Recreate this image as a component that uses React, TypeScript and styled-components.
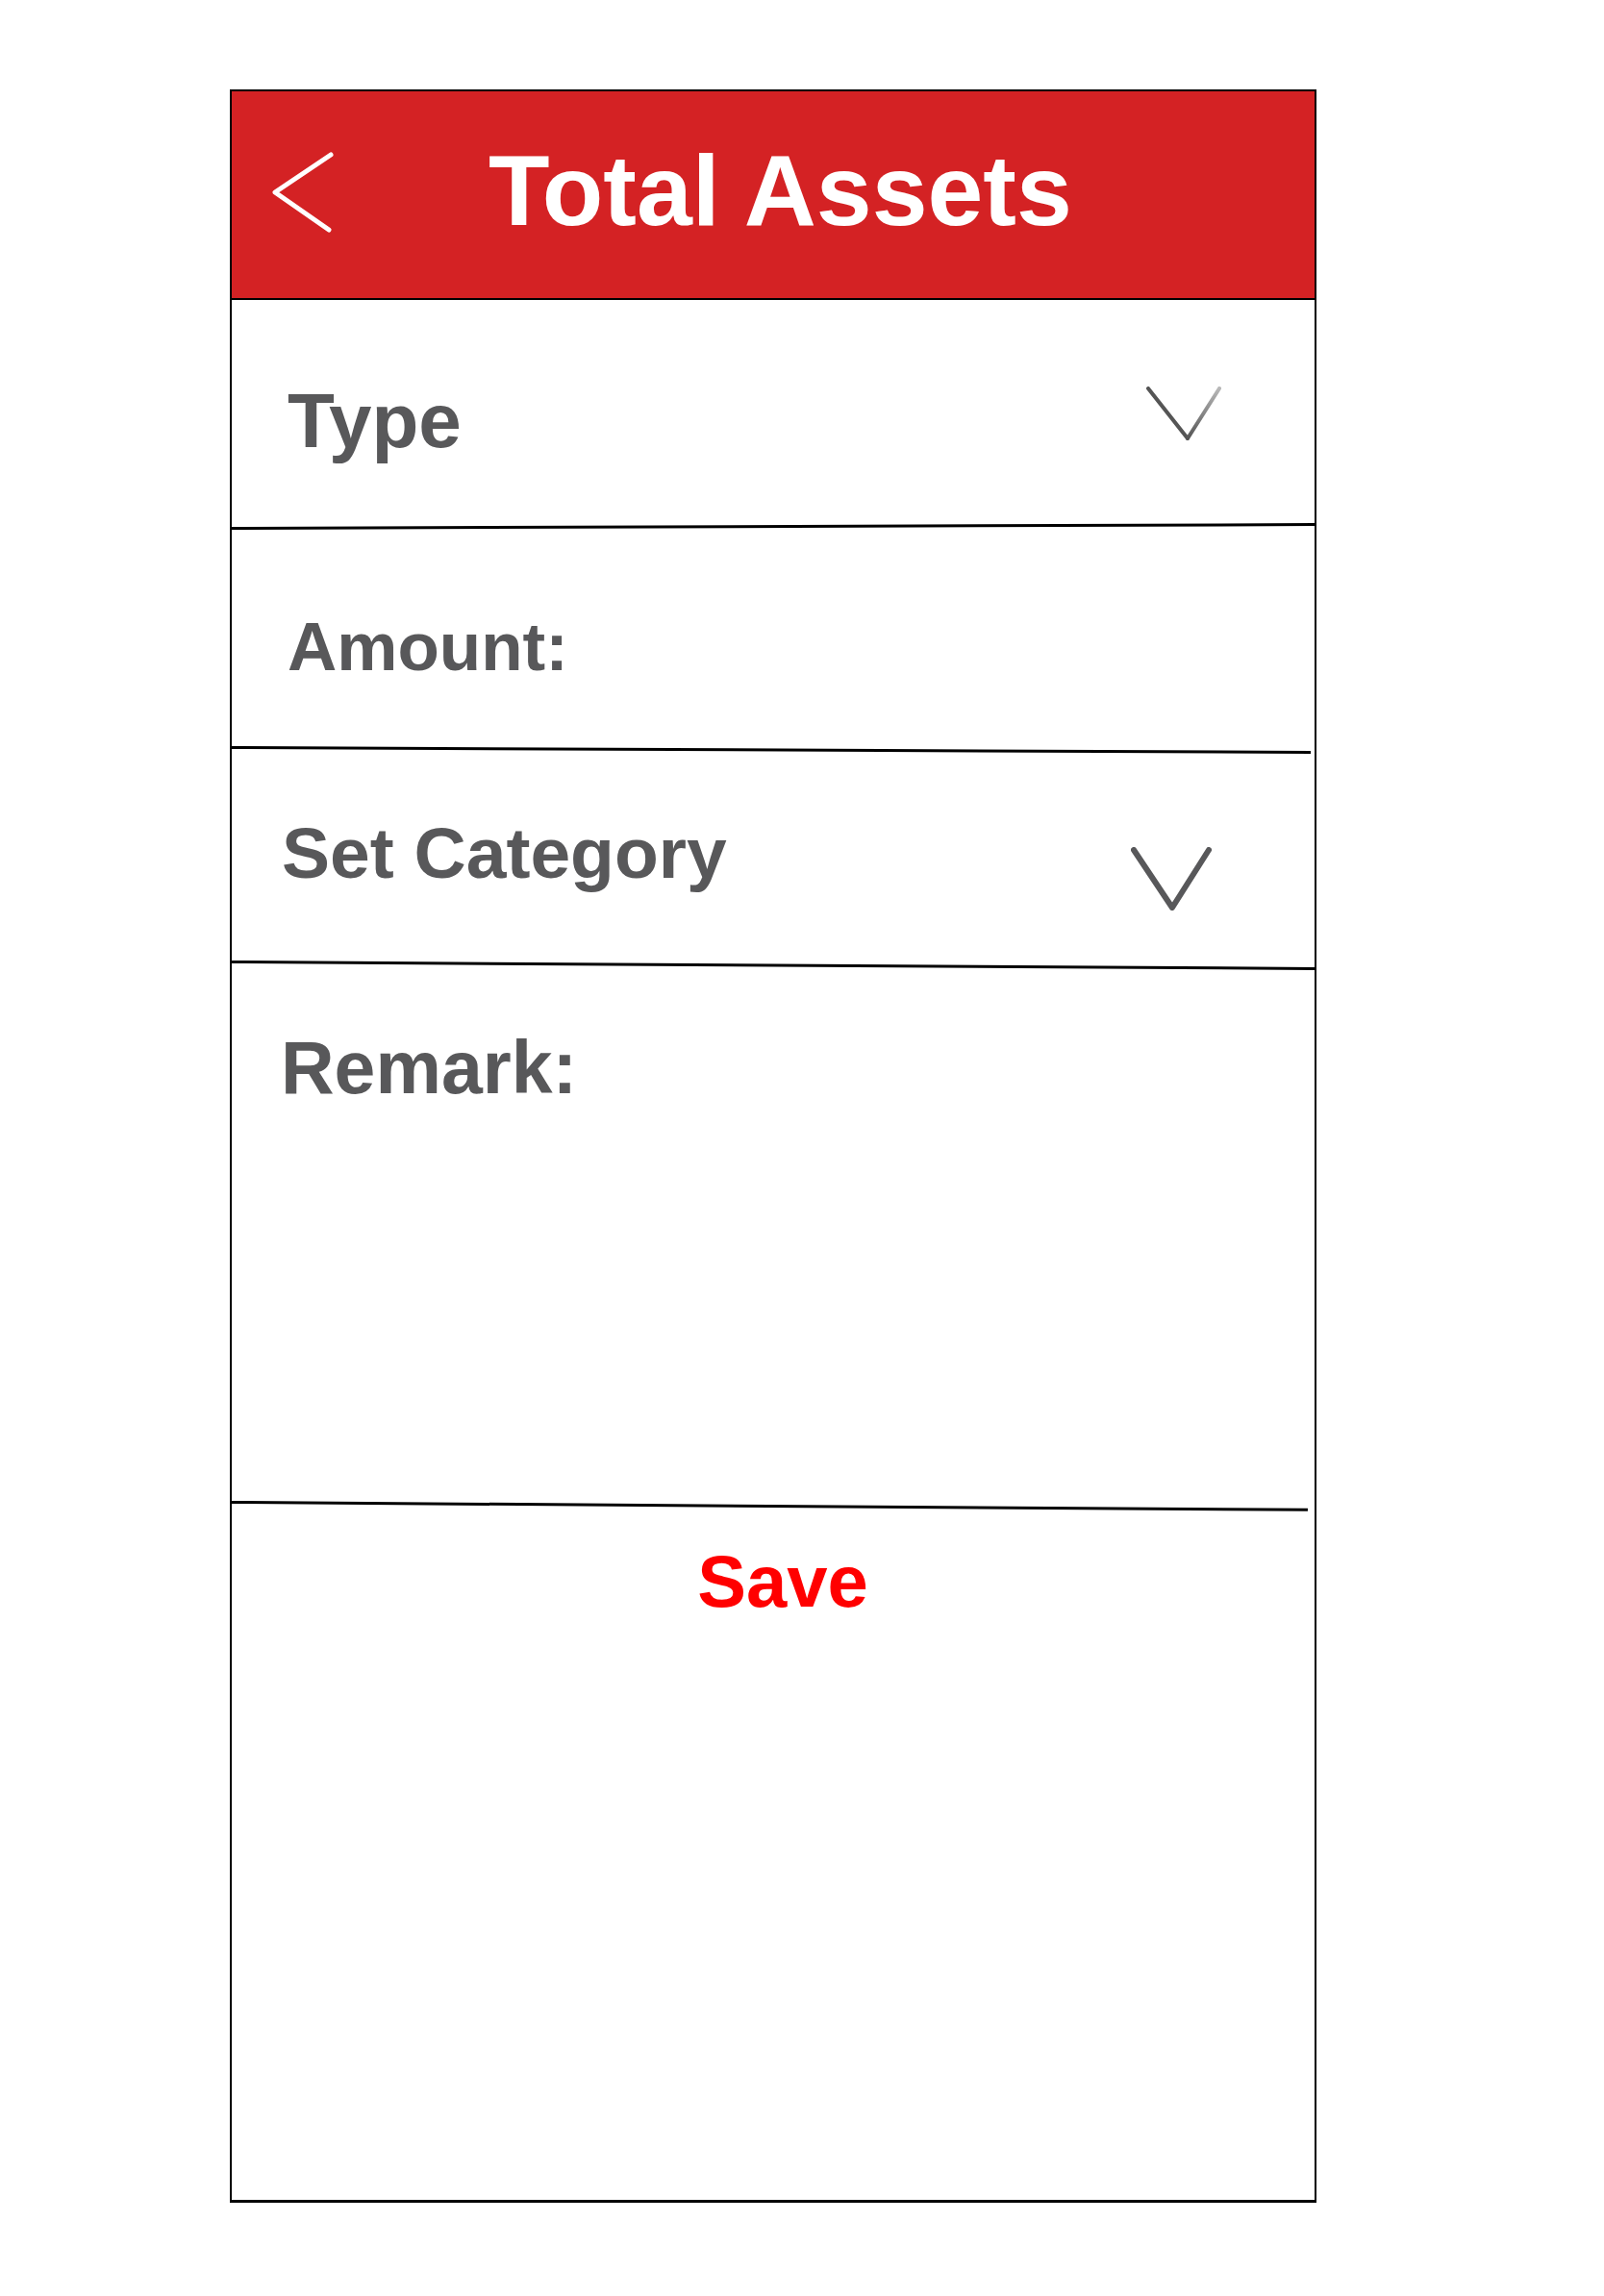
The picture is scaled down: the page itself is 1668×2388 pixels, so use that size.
import styled, { createGlobalStyle } from 'styled-components';

const GlobalStyle = createGlobalStyle`
  html, body {
    margin: 0;
    padding: 0;
    background: #fff;
  }
  body {
    font-family: "Liberation Sans", Arial, sans-serif;
  }
`;

const Page = styled.div`
  padding: 93px 0 0 239px;
`;

const Frame = styled.div`
  width: 1130px;
  height: 2198px;
  box-sizing: border-box;
  border: 2px solid #000;
  border-bottom-width: 3px;
  display: flex;
  flex-direction: column;
  background: #fff;
`;

const Header = styled.header`
  height: 217px;
  box-sizing: border-box;
  background: #d42224;
  border-bottom: 2px solid #000;
  display: flex;
  align-items: flex-start;
`;

const BackButton = styled.button`
  margin: 63px 0 0 42px;
  padding: 0;
  border: 0;
  background: none;
  display: flex;
  cursor: pointer;
`;

const Title = styled.h1`
  margin: 51px 0 0 161px;
  font-size: 104px;
  line-height: 1;
  font-weight: 700;
  color: #fff;
`;

const Field = styled.div<{ $h: number; $pad: number; $indent: number }>`
  height: ${({ $h }) => $h}px;
  box-sizing: border-box;
  padding: ${({ $pad }) => $pad}px 0 0 ${({ $indent }) => $indent}px;
  display: flex;
  align-items: flex-start;
`;

const Label = styled.span<{ $size: number }>`
  font-size: ${({ $size }) => $size}px;
  line-height: 1;
  font-weight: 700;
  color: #58585a;
`;

const Chevron = styled.span<{ $top: number; $right: number }>`
  margin: ${({ $top }) => $top}px ${({ $right }) => $right}px 0 auto;
  display: flex;
`;

const Rule = styled.div<{ $tilt: number; $inset: number }>`
  height: 3px;
  flex-shrink: 0;
  background: #000;
  margin-right: ${({ $inset }) => $inset}px;
  transform: rotate(${({ $tilt }) => $tilt}deg);
  transform-origin: left center;
`;

const SaveBar = styled.div`
  flex: 1;
  display: flex;
  justify-content: center;
  align-items: flex-start;
  padding: 43px 0 0 20px;
`;

const SaveButton = styled.button`
  margin: 0;
  padding: 0;
  border: 0;
  background: none;
  font-family: "Liberation Sans", Arial, sans-serif;
  font-size: 76px;
  line-height: 1;
  font-weight: 700;
  color: #ff0000;
  cursor: pointer;
`;

function BackIcon() {
  return (
    <svg width="64" height="84" viewBox="0 0 64 84">
      <polyline
        points="61,3 3,42 59,81"
        fill="none"
        stroke="#fff"
        strokeWidth="5"
        strokeLinecap="round"
        strokeLinejoin="round"
      />
    </svg>
  );
}

function ThinDown() {
  return (
    <svg width="78" height="56" viewBox="0 0 78 56">
      <defs>
        <linearGradient id="fade" x1="0" y1="0" x2="0" y2="1">
          <stop offset="0" stopColor="#b8b8b8" />
          <stop offset="1" stopColor="#555" />
        </linearGradient>
      </defs>
      <line x1="2" y1="2" x2="43" y2="54" stroke="#555" strokeWidth="4" strokeLinecap="round" />
      <line x1="43" y1="54" x2="76" y2="2" stroke="url(#fade)" strokeWidth="4" strokeLinecap="round" />
    </svg>
  );
}

function BoldDown() {
  return (
    <svg width="84" height="66" viewBox="0 0 84 66">
      <polyline
        points="3,3 43,63 81,3"
        fill="none"
        stroke="#58585a"
        strokeWidth="6"
        strokeLinecap="round"
        strokeLinejoin="round"
      />
    </svg>
  );
}

export default function App() {
  return (
    <>
      <GlobalStyle />
      <Page>
        <Frame>
          <Header>
            <BackButton aria-label="Back">
              <BackIcon />
            </BackButton>
            <Title>Total Assets</Title>
          </Header>

          <Field $h={236} $pad={86} $indent={58}>
            <Label $size={80}>Type</Label>
            <Chevron $top={4} $right={97}>
              <ThinDown />
            </Chevron>
          </Field>
          <Rule $tilt={-0.2} $inset={0} />

          <Field $h={225} $pad={86} $indent={58}>
            <Label $size={71}>Amount:</Label>
          </Field>
          <Rule $tilt={0.25} $inset={4} />

          <Field $h={220} $pad={71} $indent={52}>
            <Label $size={75}>Set Category</Label>
            <Chevron $top={31} $right={107}>
              <BoldDown />
            </Chevron>
          </Field>
          <Rule $tilt={0.35} $inset={0} />

          <Field $h={559} $pad={70} $indent={51}>
            <Label $size={77}>Remark:</Label>
          </Field>
          <Rule $tilt={0.4} $inset={7} />

          <SaveBar>
            <SaveButton>Save</SaveButton>
          </SaveBar>
        </Frame>
      </Page>
    </>
  );
}
